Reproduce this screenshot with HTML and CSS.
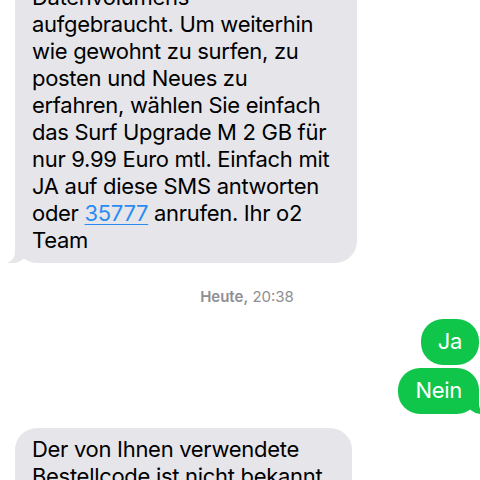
FILE: index.html
```html
<!DOCTYPE html>
<html lang="de">
<head>
<meta charset="utf-8">
<title>Nachrichten</title>
<link rel="stylesheet" href="styles.css">
</head>
<body>
<div class="chat">
  <div class="bubble in first">Datenvolumens<br>aufgebraucht. Um weiterhin<br>wie gewohnt zu surfen, zu<br>posten und Neues zu<br>erfahren, wählen Sie einfach<br>das Surf Upgrade M 2 GB für<br>nur 9.99 Euro mtl. Einfach mit<br>JA auf diese SMS antworten<br>oder <span class="link">35777</span> anrufen. Ihr o2<br>Team</div>
  <div class="stamp"><b>Heute,</b> 20:38</div>
  <div class="bubble out ja">Ja</div>
  <div class="bubble out nein tail">Nein</div>
  <div class="bubble in third">Der von Ihnen verwendete<br>Bestellcode ist nicht bekannt.</div>
</div>
</body>
</html>
```
FILE: styles.css
```css
html, body {
  margin: 0;
  padding: 0;
  background: #ffffff;
  overflow: hidden;
}
body {
  width: 480px;
  height: 480px;
  font-family: Inter, "Noto Sans", sans-serif;
}
.chat {
  display: flex;
  flex-direction: column;
  padding: 0 1px 0 15px;
}
.bubble {
  position: relative;
  box-sizing: border-box;
  font-size: 22px;
  line-height: 27px;
  letter-spacing: -0.3px;
  border-radius: 22px;
  white-space: nowrap;
}
.in {
  align-self: flex-start;
  background: #e5e5ea;
  color: #000;
  padding: 8px 17px 9px 17px;
}
.out {
  align-self: flex-end;
  background: #0fc64b;
  color: #fff;
  padding: 9px 17px 10px 17px;
}
.first {
  margin-top: -24px;
  width: 342px;
}
.first::before,
.tail::before {
  content: "";
  position: absolute;
  bottom: 0;
  width: 20px;
  height: 22px;
}
.first::before {
  left: -7px;
  background: #e5e5ea;
  border-bottom-right-radius: 16px 14px;
}
.first::after,
.tail::after {
  content: "";
  position: absolute;
  bottom: 0;
  width: 10px;
  height: 22px;
  background: #ffffff;
}
.first::after {
  left: -10px;
  border-bottom-right-radius: 10px;
}
.tail::before {
  right: -7px;
  background: #0fc64b;
  border-bottom-left-radius: 16px 14px;
}
.tail::after {
  right: -10px;
  border-bottom-left-radius: 10px;
}
.link {
  color: #2a8cf0;
  text-decoration: underline;
  text-decoration-thickness: 1px;
  text-underline-offset: 3px;
}
.stamp {
  align-self: center;
  margin: 25px 0 13px 0;
  font-size: 15px;
  line-height: 18px;
  color: #8e8e93;
}
.stamp b {
  font-weight: 600;
}
.nein {
  margin-top: 3px;
}
.third {
  margin-top: 14px;
  width: 337px;
}
```
